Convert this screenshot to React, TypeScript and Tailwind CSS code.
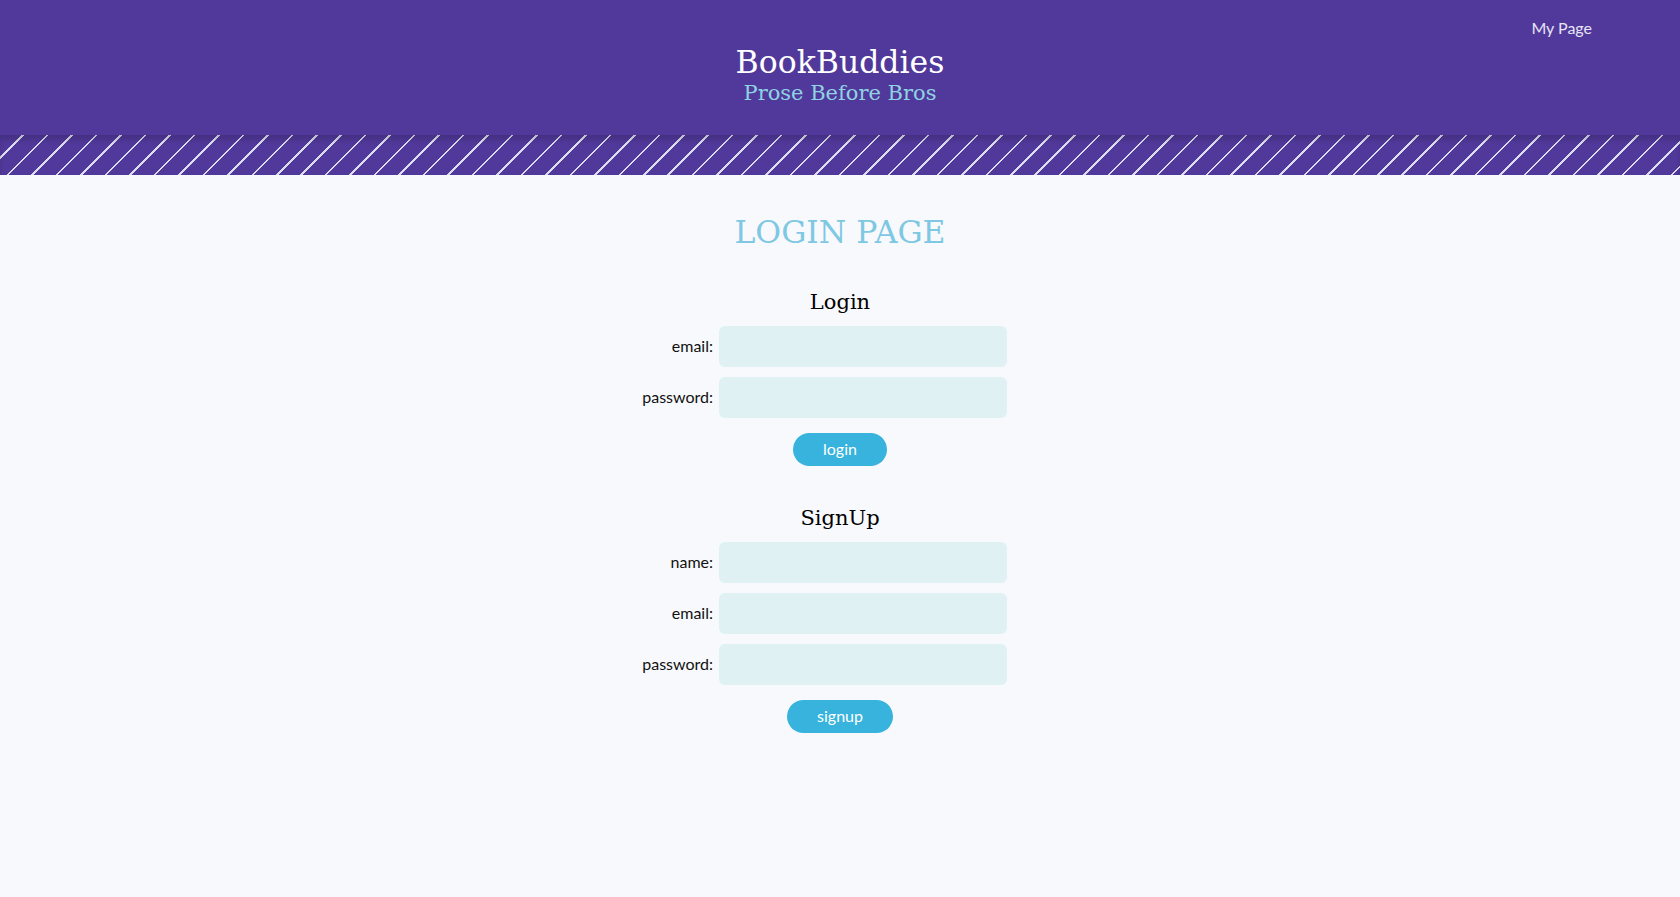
import { useState } from "react"

const serif = "font-['DejaVu_Serif',serif]"
const sans = "font-['Lato',sans-serif]"

function Field({ label, type = "text" }: { label: string; type?: string }) {
  const [value, setValue] = useState("")
  return (
    <>
      <label className="justify-self-end self-center text-[16px] text-[#111]">{label}</label>
      <input
        type={type}
        value={value}
        onChange={(e) => setValue(e.target.value)}
        className="h-[41px] w-[288px] rounded-[6px] bg-[#e0f1f3] px-3 outline-none"
      />
    </>
  )
}

function FormBlock({
  title,
  fields,
  button,
  buttonWidth,
}: {
  title: string
  fields: { label: string; type?: string }[]
  button: string
  buttonWidth: string
}) {
  return (
    <div className="flex flex-col items-center">
      <h2 className={`${serif} text-[21px] leading-[24px] text-black`}>{title}</h2>
      <div className="mt-[12px] w-[400px] grid grid-cols-[73px_288px] gap-x-[6px] gap-y-[10px]">
        {fields.map((f) => (
          <Field key={f.label} label={f.label} type={f.type} />
        ))}
      </div>
      <button
        type="button"
        className={`mt-[15px] h-[33px] ${buttonWidth} rounded-full bg-[#37b3dd] text-[16px] text-white`}
      >
        {button}
      </button>
    </div>
  )
}

export default function App() {
  return (
    <div className={`min-h-[897px] bg-[#f8f9fc] ${sans}`}>
      {/* header */}
      <header className="h-[135px] bg-[#51399b] grid grid-cols-[1fr_auto_1fr]">
        <div />
        <div className="flex flex-col items-center pt-[47px]">
          <h1 className={`${serif} text-[31.5px] leading-none text-white`}>BookBuddies</h1>
          <p className={`${serif} mt-[4px] text-[21px] leading-none text-[#8fd3e3]`}>Prose Before Bros</p>
        </div>
        <nav className="justify-self-end pr-[88px] pt-[16px]">
          <a href="#" className="text-[16px] text-[#e6e4f5]">My Page</a>
        </nav>
      </header>

      {/* stripes */}
      <div className="h-[40px] bg-[repeating-linear-gradient(135deg,#51399b_0px,#51399b_15.5px,#dcdcf0_15.5px,#dcdcf0_17.3px)] shadow-[inset_0_5px_5px_rgba(0,0,0,0.15)]" />

      <main className="flex flex-col items-center pt-[42px] pb-20">
        <h1 className={`${serif} text-[31.5px] leading-none text-[#7ec8e3]`}>LOGIN PAGE</h1>
        <div className="mt-[41px]">
          <FormBlock
            title="Login"
            fields={[{ label: "email:" }, { label: "password:", type: "password" }]}
            button="login"
            buttonWidth="w-[94px]"
          />
        </div>
        <div className="mt-[40px]">
          <FormBlock
            title="SignUp"
            fields={[{ label: "name:" }, { label: "email:" }, { label: "password:", type: "password" }]}
            button="signup"
            buttonWidth="w-[106px]"
          />
        </div>
      </main>
    </div>
  )
}
